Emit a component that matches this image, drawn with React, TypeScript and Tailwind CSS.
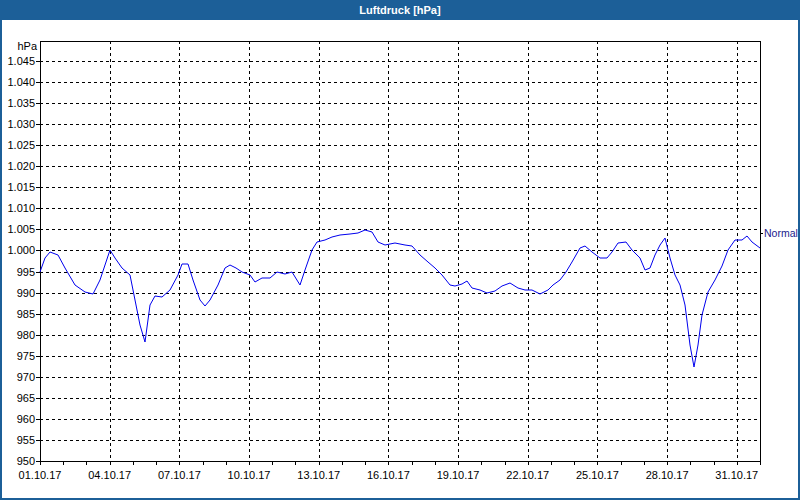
const pts: [number, number][] = [
  [40,272],[45,258],[50,252],[58,255],[65,268],[75,285],[85,292],[93,294],[100,280],[110,250],[115,258],[122,268],[130,275],[135,300],[140,325],[145,342],[150,305],[155,296],[162,297],[170,290],[178,275],[182,264],[188,264],[193,280],[200,300],[205,306],[210,300],[218,285],[225,268],[230,265],[236,268],[242,272],[250,275],[255,282],[262,278],[270,278],[277,272],[285,274],[292,272],[300,285],[305,270],[312,250],[317,242],[325,240],[332,237],[340,235],[350,234],[358,233],[365,230],[372,232],[378,242],[385,245],[395,243],[405,245],[412,246],[420,255],[428,262],[435,268],[442,275],[450,285],[455,286],[462,284],[467,281],[472,288],[480,290],[487,293],[495,291],[502,286],[510,283],[518,288],[525,290],[532,290],[540,294],[548,290],[553,285],[560,280],[566,272],[572,262],[580,248],[585,246],[592,252],[600,258],[607,258],[612,252],[618,243],[626,242],[632,250],[640,258],[645,270],[650,268],[655,255],[660,245],[665,238],[670,258],[675,275],[680,285],[685,305],[690,345],[694,367],[698,345],[702,315],[708,292],[715,280],[722,266],[728,250],[735,240],[742,240],[747,236],[752,242],[760,248],
]

const L = 40, R = 760, T = 41, B = 461
const dayX = (d: number) => L + d * (720 / 31)
const valY = (v: number) => Math.round(B - (v - 950) * (400 / 95))

export default function App() {
  const yTicks = Array.from({ length: 20 }, (_, i) => 950 + i * 5)
  const majors = [0, 3, 6, 9, 12, 15, 18, 21, 24, 27, 30]
  return (
    <div className="w-[800px] h-[500px] flex flex-col bg-white border-x-2 border-b-2 border-[#1c5f98]" style={{ fontFamily: '"Liberation Sans", Arial, sans-serif' }}>
      <div className="h-[20px] shrink-0 bg-[#1c5f98] text-white text-[11px] font-bold flex items-center justify-center">
        Luftdruck [hPa]
      </div>
      <svg width={796} height={478} viewBox="2 20 796 478" className="block">
        <g stroke="#000" strokeWidth={1} strokeDasharray="3 3" shapeRendering="crispEdges">
          {yTicks.slice(1).map(v => {
            const y = valY(v) + 0.5
            return <line key={v} x1={L} x2={R} y1={y} y2={y} />
          })}
          {majors.slice(1).map(d => {
            const x = Math.round(dayX(d)) + 0.5
            return <line key={d} x1={x} x2={x} y1={T} y2={B} />
          })}
        </g>
        <g stroke="#000" strokeWidth={1} shapeRendering="crispEdges">
          <line x1={L + 0.5} x2={L + 0.5} y1={T} y2={B + 4} />
          <line x1={L} x2={R + 1} y1={B + 0.5} y2={B + 0.5} />
          <line x1={L} x2={R + 1} y1={T + 0.5} y2={T + 0.5} />
          <line x1={R + 0.5} x2={R + 0.5} y1={T} y2={B + 4} />
          {Array.from({ length: 31 }, (_, d) => {
            const x = Math.round(dayX(d)) + 0.5
            return <line key={d} x1={x} x2={x} y1={B} y2={B + 4} />
          })}
          {yTicks.map(v => {
            const y = valY(v) + 0.5
            return <line key={v} x1={L - 4} x2={L} y1={y} y2={y} />
          })}
        </g>
        <g fontSize={11} fill="#000">
          <text x={L - 3} y={50} textAnchor="end">hPa</text>
          {yTicks.map(v => {
            const y = valY(v) + 4
            const label = v >= 1000 ? `1.${String(v - 1000).padStart(3, '0')}` : String(v)
            return <text key={v} x={L - 5} y={y} textAnchor="end">{label}</text>
          })}
          {majors.map(d => (
            <text key={d} x={dayX(d)} y={479} textAnchor="middle">
              {String(d + 1).padStart(2, '0')}.10.17
            </text>
          ))}
          <text x={764} y={237} fill="#1a1a8c" fontSize={10.5}>Normal</text>
        </g>
        <line x1={760} x2={763} y1={233.5} y2={233.5} stroke="#000" />
        <polyline points={pts.map(p => p.join(',')).join(' ')} fill="none" stroke="#0000ee" strokeWidth={1} />
      </svg>
    </div>
  )
}
